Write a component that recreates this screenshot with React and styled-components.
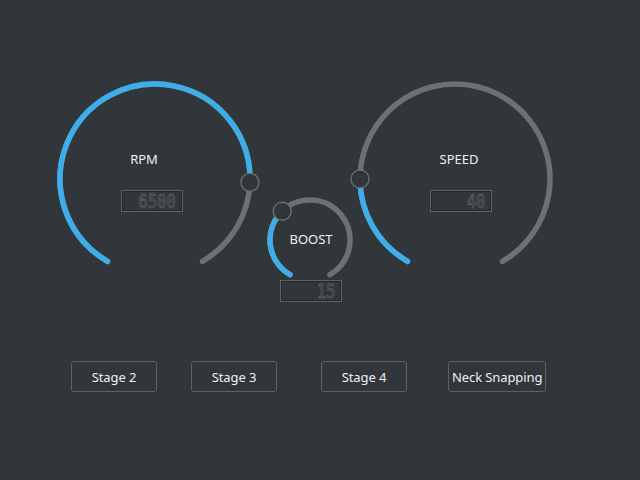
import styled, { createGlobalStyle } from 'styled-components'

const GlobalStyle = createGlobalStyle`
    html, body {
        margin:0;
        padding:0;
        background:#31363b;
    }
    body {
        width:640px;
        height:480px;
        overflow:hidden;
        font-family:"Noto Sans", "DejaVu Sans", sans-serif;
        color:#eff0f1;
    }
`

const Page = styled.div`
    width:640px;
    height:480px;
    display:flex;
    flex-direction:column;
    box-sizing:border-box;
    padding-top:79px;
`

const GaugeRow = styled.div`
    display:flex;
    align-items:flex-start;
    padding-left:55px;
`

const GaugeBox = styled.div`
    position:relative;
    flex:none;
    width:${p => p.$size}px;
    height:${p => p.$size}px;
    margin-left:${p => p.$left || 0}px;
    margin-top:${p => p.$top || 0}px;

    svg {
        display:block;
        overflow:visible;
    }
`

const Label = styled.span`
    position:absolute;
    left:${p => p.$x}px;
    top:${p => p.$y}px;
    transform:translate(-50%, -50%);
    font-size:13px;
    color:#eff0f1;
    white-space:nowrap;
`

const Lcd = styled.div`
    position:absolute;
    left:${p => p.$x}px;
    top:${p => p.$y}px;
    width:62px;
    height:22px;
    box-sizing:border-box;
    border:1px solid #5f6368;
    box-shadow:inset 0 0 0 1px #25292c;
    display:flex;
    align-items:center;
    justify-content:flex-end;
    padding-right:6px;
`

const Digits = styled.span`
    display:inline-block;
    font-family:"DejaVu Sans Mono", "Liberation Mono", monospace;
    font-size:17px;
    line-height:18px;
    color:#2c3034;
    -webkit-text-stroke:0.8px #5a5f64;
    transform:scale(0.92, 1.12);
    transform-origin:right center;
`

const ButtonRow = styled.div`
    display:flex;
    margin-top:76px;
    padding-left:71px;
`

const Button = styled.button`
    flex:none;
    height:31px;
    min-width:86px;
    margin-left:${p => p.$left || 0}px;
    padding:0 3px;
    box-sizing:border-box;
    background:#31363b;
    border:1px solid #5c6065;
    border-radius:3px;
    color:#eff0f1;
    font-family:"Noto Sans", "DejaVu Sans", sans-serif;
    font-size:13px;
    letter-spacing:-0.1px;
`

const BLUE = '#3daee9'
const TRACK = '#6d7074'

const point = (c, r, deg) => {
    const a = (deg * Math.PI) / 180
    return [c + r * Math.sin(a), c - r * Math.cos(a)]
}

const arc = (c, r, from, to) => {
    const [x0, y0] = point(c, r, from)
    const [x1, y1] = point(c, r, to)
    const large = to - from > 180 ? 1 : 0
    return `M ${x0} ${y0} A ${r} ${r} 0 ${large} 1 ${x1} ${y1}`
}

// dial drawing: gray track, blue value, round handle
const Dial = ({ size, radius, angle }) => {
    const c = size / 2
    const [hx, hy] = point(c, radius, angle)
    return (
        <svg width={size} height={size} viewBox={`0 0 ${size} ${size}`}>
            <path d={arc(c, radius, -150, 150)} fill="none" stroke={TRACK} strokeWidth="5.5" strokeLinecap="round" />
            <path d={arc(c, radius, -150, angle)} fill="none" stroke={BLUE} strokeWidth="5.5" strokeLinecap="round" />
            <circle cx={hx} cy={hy} r="9" fill="#31363b" stroke="#6d7074" strokeWidth="1.3" />
        </svg>
    )
}

const Gauge = ({ size, radius, angle, label, labelAt, value, lcdAt, left, top }) => (
    <GaugeBox $size={size} $left={left} $top={top}>
        <Dial size={size} radius={radius} angle={angle} />
        <Label $x={labelAt[0]} $y={labelAt[1]}>{label}</Label>
        <Lcd $x={lcdAt[0]} $y={lcdAt[1]}>
            <Digits>{value}</Digits>
        </Lcd>
    </GaugeBox>
)

const App = () => {
    return <>
        <GlobalStyle />
        <Page>
            <GaugeRow>
                <Gauge size={200} radius={95} angle={92} label="RPM" labelAt={[89, 80]} value="6500" lcdAt={[66, 111]} />
                <Gauge size={90} radius={40} angle={-44} label="BOOST" labelAt={[46, 44]} value="15" lcdAt={[15, 85]} left={10} top={116} />
                <Gauge size={200} radius={95} angle={-90} label="SPEED" labelAt={[104, 80]} value="40" lcdAt={[75, 111]} />
            </GaugeRow>

            <ButtonRow>
                <Button>Stage 2</Button>
                <Button $left={34}>Stage 3</Button>
                <Button $left={44}>Stage 4</Button>
                <Button $left={41}>Neck Snapping</Button>
            </ButtonRow>
        </Page>
    </>
}

export default App
